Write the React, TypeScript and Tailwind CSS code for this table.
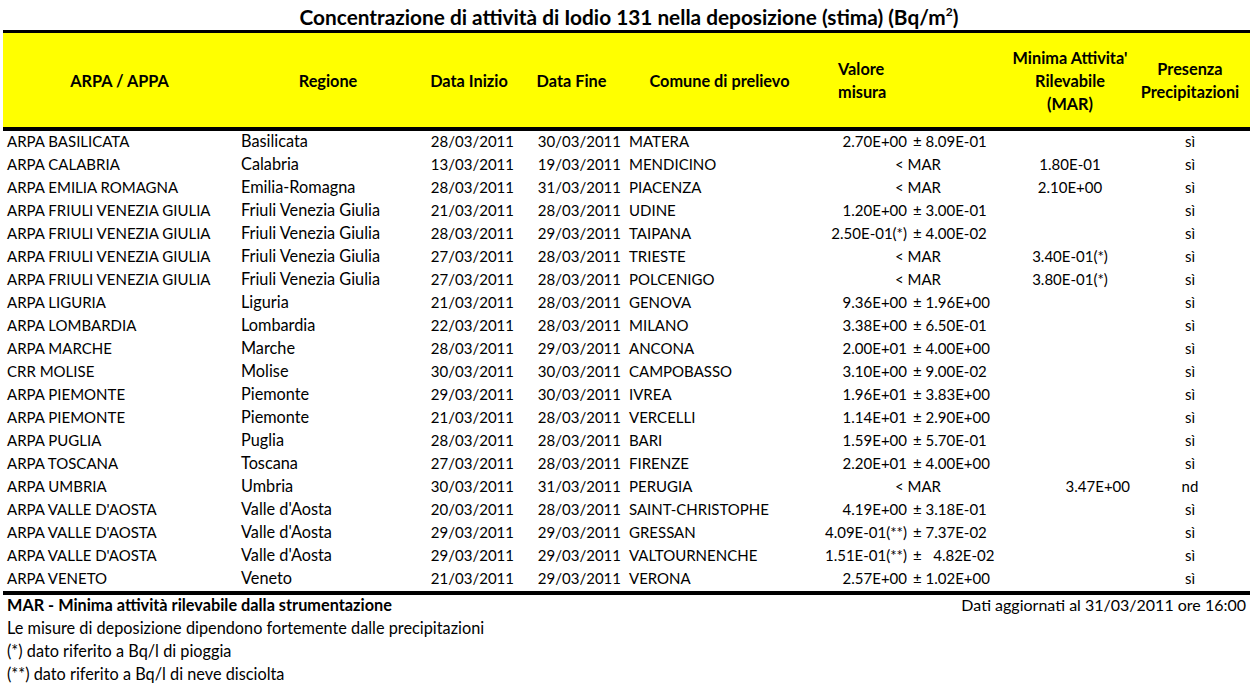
import React from "react";

type Row = {
  ente: string;
  regione: string;
  inizio: string;
  fine: string;
  comune: string;
  valore?: string; // missing -> "< MAR"
  errore?: string;
  mar?: string;
  marRight?: boolean;
  pres: string;
};

const rows: Row[] = [
  { ente: "ARPA BASILICATA", regione: "Basilicata", inizio: "28/03/2011", fine: "30/03/2011", comune: "MATERA", valore: "2.70E+00", errore: "± 8.09E-01", pres: "sì" },
  { ente: "ARPA CALABRIA", regione: "Calabria", inizio: "13/03/2011", fine: "19/03/2011", comune: "MENDICINO", mar: "1.80E-01", pres: "sì" },
  { ente: "ARPA EMILIA ROMAGNA", regione: "Emilia-Romagna", inizio: "28/03/2011", fine: "31/03/2011", comune: "PIACENZA", mar: "2.10E+00", pres: "sì" },
  { ente: "ARPA FRIULI VENEZIA GIULIA", regione: "Friuli Venezia Giulia", inizio: "21/03/2011", fine: "28/03/2011", comune: "UDINE", valore: "1.20E+00", errore: "± 3.00E-01", pres: "sì" },
  { ente: "ARPA FRIULI VENEZIA GIULIA", regione: "Friuli Venezia Giulia", inizio: "28/03/2011", fine: "29/03/2011", comune: "TAIPANA", valore: "2.50E-01(*)", errore: "± 4.00E-02", pres: "sì" },
  { ente: "ARPA FRIULI VENEZIA GIULIA", regione: "Friuli Venezia Giulia", inizio: "27/03/2011", fine: "28/03/2011", comune: "TRIESTE", mar: "3.40E-01(*)", pres: "sì" },
  { ente: "ARPA FRIULI VENEZIA GIULIA", regione: "Friuli Venezia Giulia", inizio: "27/03/2011", fine: "28/03/2011", comune: "POLCENIGO", mar: "3.80E-01(*)", pres: "sì" },
  { ente: "ARPA LIGURIA", regione: "Liguria", inizio: "21/03/2011", fine: "28/03/2011", comune: "GENOVA", valore: "9.36E+00", errore: "± 1.96E+00", pres: "sì" },
  { ente: "ARPA LOMBARDIA", regione: "Lombardia", inizio: "22/03/2011", fine: "28/03/2011", comune: "MILANO", valore: "3.38E+00", errore: "± 6.50E-01", pres: "sì" },
  { ente: "ARPA MARCHE", regione: "Marche", inizio: "28/03/2011", fine: "29/03/2011", comune: "ANCONA", valore: "2.00E+01", errore: "± 4.00E+00", pres: "sì" },
  { ente: "CRR MOLISE", regione: "Molise", inizio: "30/03/2011", fine: "30/03/2011", comune: "CAMPOBASSO", valore: "3.10E+00", errore: "± 9.00E-02", pres: "sì" },
  { ente: "ARPA PIEMONTE", regione: "Piemonte", inizio: "29/03/2011", fine: "30/03/2011", comune: "IVREA", valore: "1.96E+01", errore: "± 3.83E+00", pres: "sì" },
  { ente: "ARPA PIEMONTE", regione: "Piemonte", inizio: "21/03/2011", fine: "28/03/2011", comune: "VERCELLI", valore: "1.14E+01", errore: "± 2.90E+00", pres: "sì" },
  { ente: "ARPA PUGLIA", regione: "Puglia", inizio: "28/03/2011", fine: "28/03/2011", comune: "BARI", valore: "1.59E+00", errore: "± 5.70E-01", pres: "sì" },
  { ente: "ARPA TOSCANA", regione: "Toscana", inizio: "27/03/2011", fine: "28/03/2011", comune: "FIRENZE", valore: "2.20E+01", errore: "± 4.00E+00", pres: "sì" },
  { ente: "ARPA UMBRIA", regione: "Umbria", inizio: "30/03/2011", fine: "31/03/2011", comune: "PERUGIA", mar: "3.47E+00", marRight: true, pres: "nd" },
  { ente: "ARPA VALLE D'AOSTA", regione: "Valle d'Aosta", inizio: "20/03/2011", fine: "28/03/2011", comune: "SAINT-CHRISTOPHE", valore: "4.19E+00", errore: "± 3.18E-01", pres: "sì" },
  { ente: "ARPA VALLE D'AOSTA", regione: "Valle d'Aosta", inizio: "29/03/2011", fine: "29/03/2011", comune: "GRESSAN", valore: "4.09E-01(**)", errore: "± 7.37E-02", pres: "sì" },
  { ente: "ARPA VALLE D'AOSTA", regione: "Valle d'Aosta", inizio: "29/03/2011", fine: "29/03/2011", comune: "VALTOURNENCHE", valore: "1.51E-01(**)", errore: "±   4.82E-02", pres: "sì" },
  { ente: "ARPA VENETO", regione: "Veneto", inizio: "21/03/2011", fine: "29/03/2011", comune: "VERONA", valore: "2.57E+00", errore: "± 1.02E+00", pres: "sì" },
];

const cols = "grid grid-cols-[233px_184px_98px_107px_185px_99px_101px_120px_120px]";

export default function App() {
  return (
    <div
      className="w-[1258px] h-[697px] bg-white text-black text-[15px] leading-[23px] overflow-hidden"
      style={{ fontFamily: "Lato, 'Open Sans', sans-serif" }}
    >
      {/* Title */}
      <div className="h-[30px] flex items-center justify-center font-bold text-[20.8px] pt-[3px]">
        Concentrazione di attività di Iodio 131 nella deposizione (stima) (Bq/m
        <sup className="text-[12px] relative -top-[5px]">2</sup>)
      </div>

      <div className="ml-[3px] w-[1247px]">
        {/* Header */}
        <div className={`${cols} h-[101px] bg-[#ffff00] border-t-[3px] border-b-[4px] border-black font-bold text-[16.3px] items-center`}>
          <div className="text-center">ARPA / APPA</div>
          <div className="text-center">Regione</div>
          <div className="text-center">Data Inizio</div>
          <div className="text-center">Data Fine</div>
          <div className="text-center pl-[4px]">Comune di prelievo</div>
          <div className="col-span-2 pl-[28px]">
            Valore
            <br />
            misura
          </div>
          <div className="text-center">
            Minima Attivita'
            <br />
            Rilevabile
            <br />
            (MAR)
          </div>
          <div className="text-center">
            Presenza
            <br />
            Precipitazioni
          </div>
        </div>

        {/* Body */}
        <div className="border-b-[4px] border-black">
          {rows.map((r, i) => (
            <div key={i} className={`${cols} h-[23px] leading-[19px] items-baseline whitespace-pre`}>
              <div className="pl-[4px]">{r.ente}</div>
              <div className="pl-[5px] text-[16.3px]">{r.regione}</div>
              <div className="text-right pr-[4px]">{r.inizio}</div>
              <div className="text-right pr-[4px]">{r.fine}</div>
              <div className="pl-[4px]">{r.comune}</div>
              {r.valore ? (
                <>
                  <div className="text-right pr-[2px]">{r.valore}</div>
                  <div className="pl-[4px]">{r.errore}</div>
                </>
              ) : (
                <div className="col-span-2 pl-[85px]">{"< MAR"}</div>
              )}
              <div className={r.marRight ? "text-right" : "text-center"}>{r.mar ?? ""}</div>
              <div className="text-center">{r.pres}</div>
            </div>
          ))}
        </div>

        {/* Notes */}
        <div className="text-[16.3px] -mt-[2px]">
          <div className="flex justify-between items-baseline pl-[4px] pr-[4px]">
            <span className="font-bold">MAR - Minima attività rilevabile dalla strumentazione</span>
            <span className="text-[16px]">Dati aggiornati al 31/03/2011 ore 16:00</span>
          </div>
          <div className="pl-[4px]">Le misure di deposizione dipendono fortemente dalle precipitazioni</div>
          <div className="pl-[4px]">(*) dato riferito a Bq/l di pioggia</div>
          <div className="pl-[4px]">(**) dato riferito a Bq/l di neve disciolta</div>
        </div>
      </div>
    </div>
  );
}
